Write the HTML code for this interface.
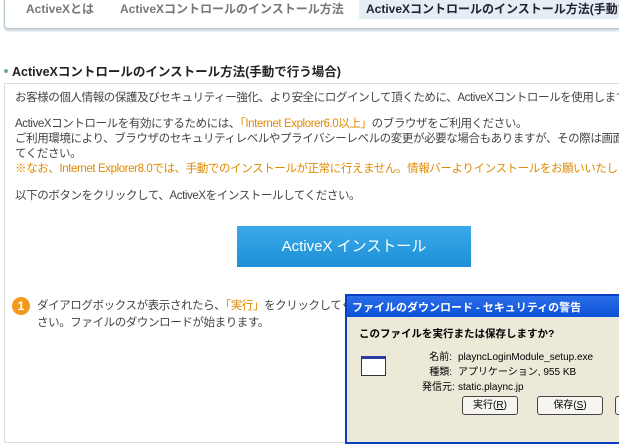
<!DOCTYPE html>
<html><head><meta charset="utf-8"><style>
*{margin:0;padding:0;box-sizing:border-box}
body{width:619px;height:436px;overflow:hidden;background:#fff;font-family:"Liberation Sans","Noto Sans CJK JP",sans-serif;position:relative;color:#444}
.abs{position:absolute;white-space:nowrap}
.tabs{position:absolute;left:4px;top:-4px;width:640px;height:33px;border:1px solid #b9c8d2;border-radius:4px;background:#fff;box-shadow:0 2px 2px #c8d4dc}
.tab{position:absolute;top:0;font-size:12px;font-weight:bold;color:#777}
.act{position:absolute;left:354px;top:0;width:280px;height:22px;background:#e4eff5}
.box{position:absolute;left:4px;top:83px;width:640px;height:360px;border:1px solid #ddd}
.t{font-size:11.5px;color:#444;letter-spacing:-0.4px}
.o{color:#e08a00}
.btn{position:absolute;left:237px;top:226px;width:234px;height:41px;background:linear-gradient(#3aaaea,#1e8fd6);color:#fff;font-size:15px;text-align:center;line-height:41px}
.num{position:absolute;left:12px;top:297px;width:18px;height:18px;border-radius:50%;background:#f39a1e;color:#fff;font-size:12px;font-weight:bold;text-align:center;line-height:18px}
.dlg{position:absolute;left:345px;top:294px;width:280px;height:150px;background:#ece9d8;border:2px solid #0a3fc4}
.ttl{height:21px;background:linear-gradient(#2c6ee8,#0b52d8);color:#fff;font-size:11px;font-weight:bold;padding:3px 5px}
.db{position:absolute;height:19px;border:1px solid #444;border-radius:3px;background:#f6f5f0;font-size:10px;text-align:center;line-height:17px;color:#000}
</style></head><body>
<div class="tabs"><div class="act"></div></div>
<div class="tab abs" style="left:26px;top:0">ActiveXとは</div>
<div class="tab abs" style="left:120px;top:0">ActiveXコントロールのインストール方法</div>
<div class="tab abs" style="left:366px;top:0;color:#223">ActiveXコントロールのインストール方法(手動で</div>
<div class="abs" style="left:4px;top:69px;width:4px;height:4px;border-radius:50%;background:#6aa"></div>
<div class="abs" style="left:12px;top:61px;font-size:12.5px;font-weight:bold;color:#222">ActiveXコントロールのインストール方法(手動で行う場合)</div>
<div class="box"></div>
<div class="abs t" style="left:15px;top:89px">お客様の個人情報の保護及びセキュリティー強化、より安全にログインして頂くために、ActiveXコントロールを使用します</div>
<div class="abs t" style="left:15px;top:115px">ActiveXコントロールを有効にするためには、<span class="o">「Internet Explorer6.0以上」</span>のブラウザをご利用ください。</div>
<div class="abs t" style="left:15px;top:130px">ご利用環境により、ブラウザのセキュリティレベルやプライバシーレベルの変更が必要な場合もありますが、その際は画面</div>
<div class="abs t" style="left:15px;top:145px">てください。</div>
<div class="abs t o" style="left:15px;top:160px">※なお、Internet Explorer8.0では、手動でのインストールが正常に行えません。情報バーよりインストールをお願いいたしま</div>
<div class="abs t" style="left:15px;top:187px">以下のボタンをクリックして、ActiveXをインストールしてください。</div>
<div class="btn">ActiveX インストール</div>
<div class="num">1</div>
<div class="abs t" style="left:37px;top:297px">ダイアログボックスが表示されたら、<span class="o">「実行」</span>をクリックしてくだ</div>
<div class="abs t" style="left:37px;top:314px">さい。ファイルのダウンロードが始まります。</div>
<div class="dlg"><div class="ttl">ファイルのダウンロード - セキュリティの警告</div>
<div class="abs" style="left:12px;top:30px;font-size:10.5px;font-weight:bold;color:#000">このファイルを実行または保存しますか?</div>
<div class="abs" style="left:14px;top:60px;width:25px;height:20px;border:1px solid #333;background:#fff;border-top:3px solid #2a3fa0"></div>
<div class="abs" style="left:75px;top:54px;font-size:10px;color:#000;line-height:15px;text-align:right;width:30px">名前:<br>種類:<br>発信元:</div>
<div class="abs" style="left:111px;top:54px;font-size:10px;color:#000;line-height:15px">playncLoginModule_setup.exe<br>アプリケーション, 955 KB<br>static.plaync.jp</div>
<div class="db" style="left:115px;top:100px;width:56px">実行(<u>R</u>)</div>
<div class="db" style="left:190px;top:100px;width:66px">保存(<u>S</u>)</div>
<div class="db" style="left:268px;top:100px;width:20px"></div>
</div>
</body></html>
